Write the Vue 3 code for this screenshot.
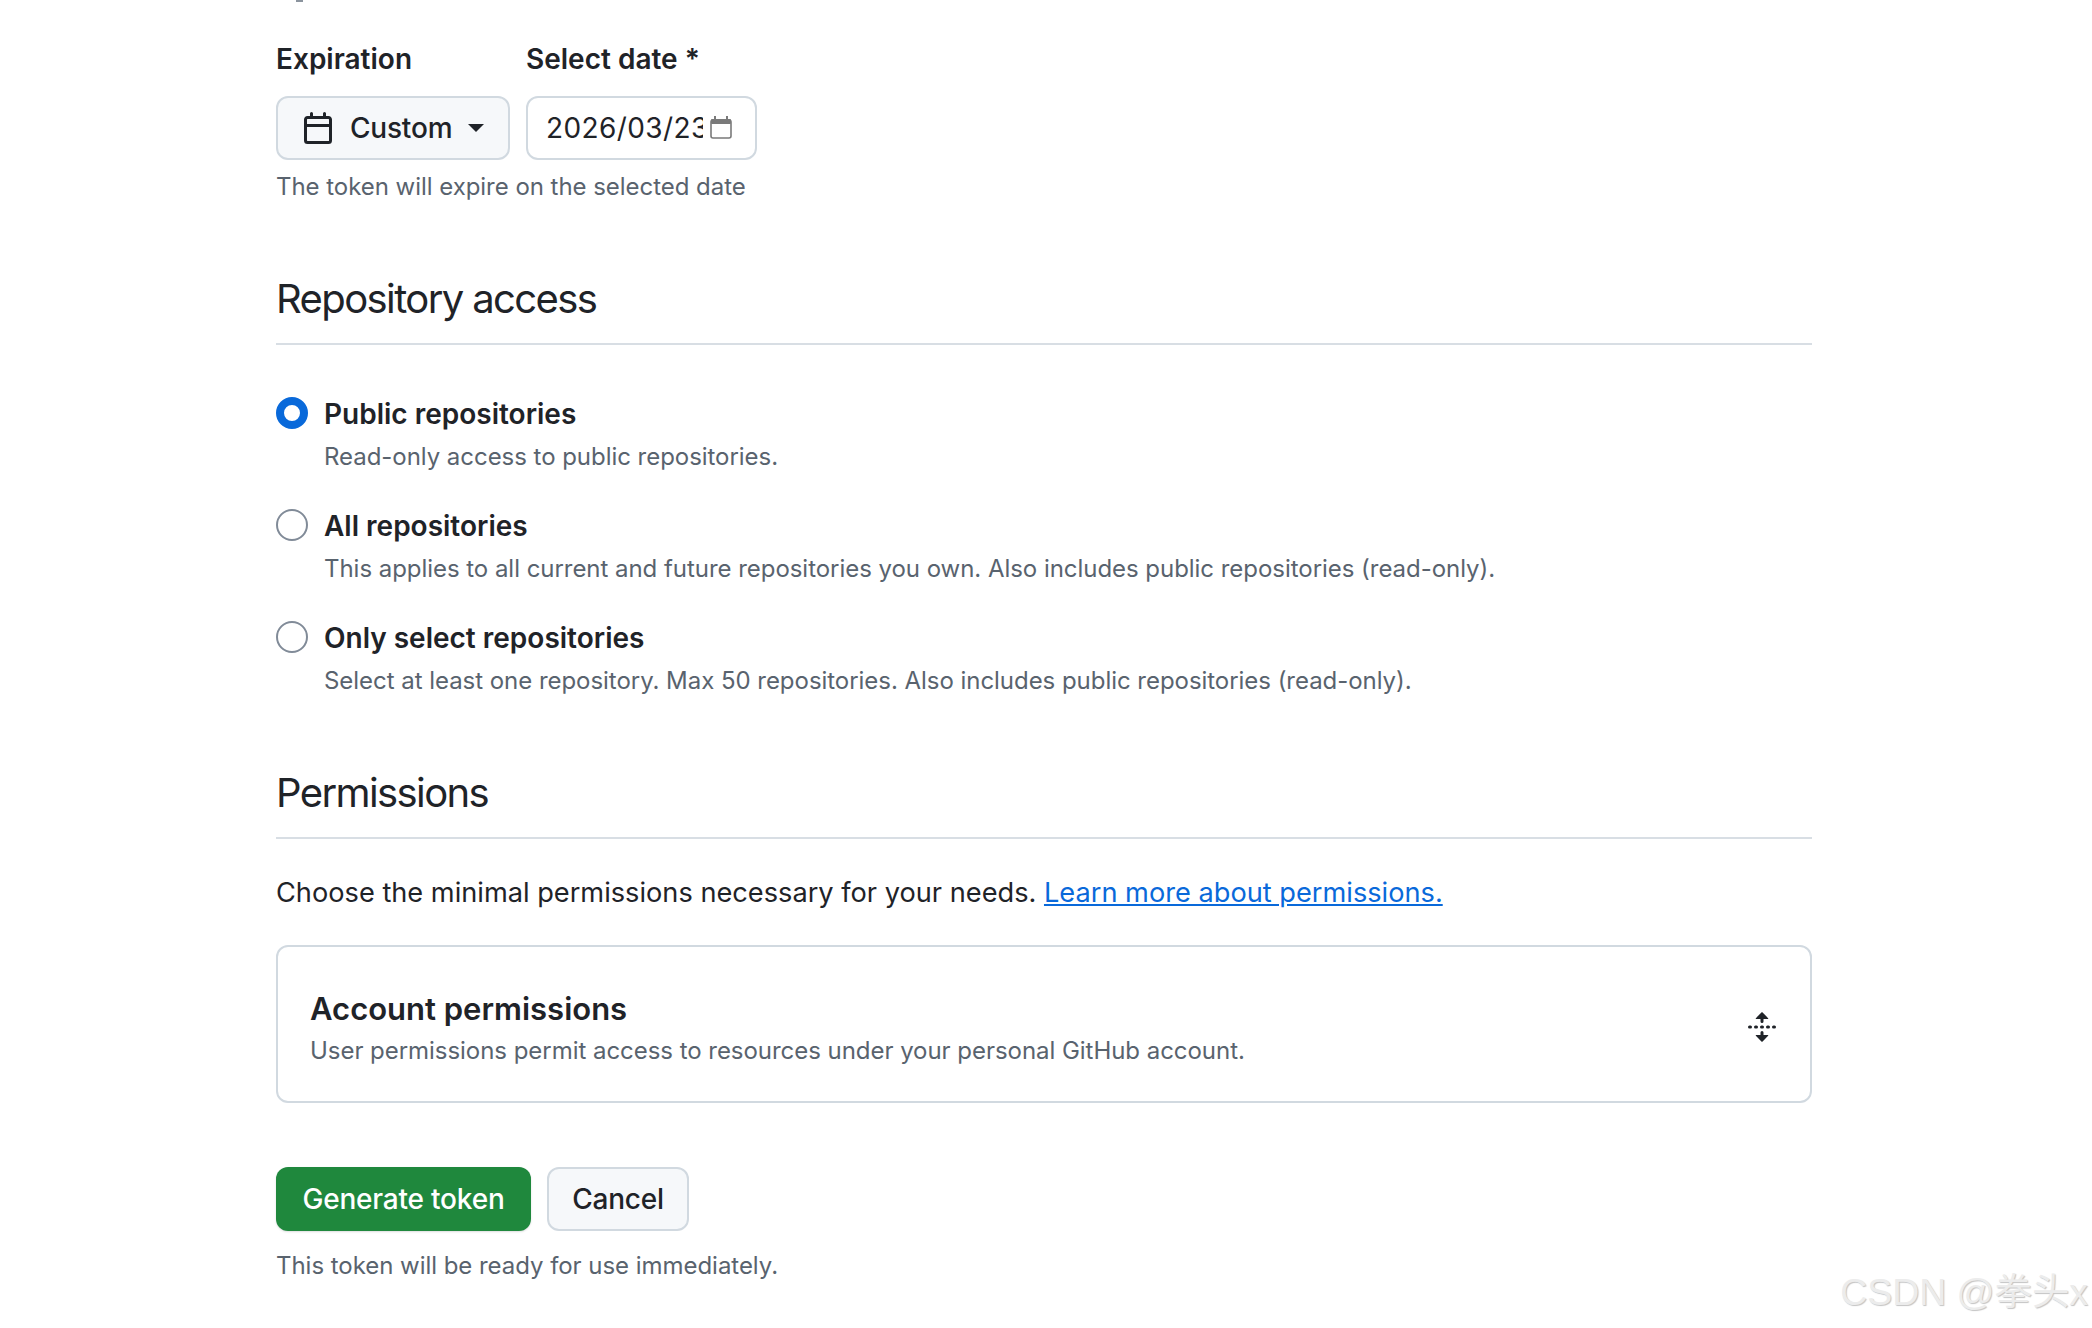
<template>
  <main class="page">
    <div class="sliver"></div>
    <section class="expiry">
      <div class="field">
        <div class="label">Expiration</div>
        <div class="btn select">
          <svg class="cal" viewBox="0 0 16 16" width="32" height="32"><path fill="currentColor" d="M4.75 0a.75.75 0 0 1 .75.75V2h5V.75a.75.75 0 0 1 1.5 0V2h1.25c.966 0 1.75.784 1.75 1.75v10.5A1.75 1.75 0 0 1 13.25 16H2.75A1.75 1.75 0 0 1 1 14.25V3.75C1 2.784 1.784 2 2.75 2H4V.75A.75.75 0 0 1 4.75 0ZM2.5 7.5v6.75c0 .138.112.25.25.25h10.5a.25.25 0 0 0 .25-.25V7.5Zm10.75-4H2.75a.25.25 0 0 0-.25.25V6h11V3.75a.25.25 0 0 0-.25-.25Z"/></svg>
          <span>Custom</span>
          <i class="caret"></i>
        </div>
      </div>
      <div class="field">
        <div class="label">Select date *</div>
        <div class="date">
          <span class="date-text">2026/03/23</span>
          <svg class="date-icon" viewBox="0 0 22 23" width="22" height="23"><rect x="1" y="4" width="20" height="18" rx="2" fill="#fff" stroke="#7a7a7a" stroke-width="1.6"/><rect x="1" y="3" width="20" height="5" rx="1" fill="#7a7a7a"/><rect x="4" y="0" width="2" height="4" fill="#7a7a7a"/><rect x="16" y="0" width="2" height="4" fill="#7a7a7a"/></svg>
        </div>
      </div>
    </section>
    <p class="note">The token will expire on the selected date</p>

    <h2 class="heading repo">Repository access</h2>
    <div class="radios">
      <div v-for="r in repos" :key="r.title" class="radio-row">
        <span class="radio" :class="{ on: r.on }"></span>
        <div>
          <div class="label">{{ r.title }}</div>
          <p class="note">{{ r.desc }}</p>
        </div>
      </div>
    </div>

    <h2 class="heading perm">Permissions</h2>
    <p class="choose">Choose the minimal permissions necessary for your needs. <a href="#">Learn more about permissions.</a></p>

    <div class="card">
      <div>
        <h3>Account permissions</h3>
        <p class="note">User permissions permit access to resources under your personal GitHub account.</p>
      </div>
      <svg class="fold" viewBox="0 0 16 16" width="32" height="32"><path fill="currentColor" d="M8.177.677l2.896 2.896a.25.25 0 0 1-.177.427H8.75v1.25a.75.75 0 0 1-1.5 0V4H5.104a.25.25 0 0 1-.177-.427L7.823.677a.25.25 0 0 1 .354 0ZM7.25 10.75a.75.75 0 0 1 1.5 0V12h2.146a.25.25 0 0 1 .177.427l-2.896 2.896a.25.25 0 0 1-.354 0l-2.896-2.896A.25.25 0 0 1 5.104 12H7.25v-1.25Zm-5-2a.75.75 0 0 0 0-1.5h-.5a.75.75 0 0 0 0 1.5h.5ZM6 8a.75.75 0 0 1-.75.75h-.5a.75.75 0 0 1 0-1.5h.5A.75.75 0 0 1 6 8Zm2.25.75a.75.75 0 0 0 0-1.5h-.5a.75.75 0 0 0 0 1.5h.5ZM12 8a.75.75 0 0 1-.75.75h-.5a.75.75 0 0 1 0-1.5h.5A.75.75 0 0 1 12 8Zm2.25.75a.75.75 0 0 0 0-1.5h-.5a.75.75 0 0 0 0 1.5h.5Z"/></svg>
    </div>

    <div class="actions">
      <div class="btn primary">Generate token</div>
      <div class="btn">Cancel</div>
    </div>
    <p class="note ready">This token will be ready for use immediately.</p>

    <div class="watermark">CSDN @拳头x</div>
  </main>
</template>

<script setup>
const repos = [
  { title: 'Public repositories', desc: 'Read-only access to public repositories.', on: true },
  { title: 'All repositories', desc: 'This applies to all current and future repositories you own. Also includes public repositories (read-only).' },
  { title: 'Only select repositories', desc: 'Select at least one repository. Max 50 repositories. Also includes public repositories (read-only).' },
]
</script>

<style>
html, body { margin: 0; background: #fff; }
</style>

<style scoped>
.page {
  position: relative;
  box-sizing: border-box;
  width: 2092px;
  height: 1328px;
  overflow: hidden;
  padding: 0 280px 0 276px;
  font-family: Inter, "Noto Sans", sans-serif;
  color: #1f2328;
  background: #fff;
}
.sliver { width: 7px; height: 2px; margin-left: 20px; background: #8b949e; }
.expiry { display: flex; gap: 16px; margin-top: 42px; }
.label { font-size: 28px; font-weight: 600; line-height: 30px; }
.field .label { margin-bottom: 22px; }
.btn {
  display: inline-flex; align-items: center; justify-content: center; box-sizing: border-box;
  height: 64px; padding: 0 24px; border: 2px solid #d1d9e0; border-radius: 12px;
  background: #f6f8fa; font-size: 28px; font-weight: 500; line-height: 1; letter-spacing: -.2px;
}
.select { width: 234px; justify-content: flex-start; padding: 0 20px 0 24px; }
.cal { margin-right: 16px; flex: none; }
.caret { margin-left: 16px; border: 8px solid transparent; border-top: 8px solid #1f2328; border-bottom: 0; }
.date {
  display: flex; align-items: center; box-sizing: border-box; width: 231px; height: 64px;
  padding: 0 22px 0 18px; border: 2px solid #d1d9e0; border-radius: 12px; font-size: 28px;
}
.date-text { width: 157px; overflow: hidden; white-space: nowrap; flex: none; letter-spacing: .4px; }
.date-icon { margin-left: 7px; margin-top: -2px; flex: none; }
.note { margin: 0; font-size: 24px; line-height: 36px; color: #59636e; letter-spacing: -.04px; }
.expiry + .note { margin-top: 9px; }
.heading { margin: 0; font-size: 40px; font-weight: 400; line-height: 60px; letter-spacing: -1.6px; padding-bottom: 14px; border-bottom: 2px solid #d8dee4; }
.repo { margin-top: 64px; }
.radios { display: flex; flex-direction: column; gap: 33px; margin-top: 51px; }
.radio-row { display: flex; gap: 16px; }
.radio-row .label { line-height: 36px; margin-bottom: 7px; }
.radio { box-sizing: border-box; width: 32px; height: 32px; margin-top: 1px; border: 2px solid #818b98; border-radius: 50%; background: #fff; flex: none; }
.radio.on { border: 8px solid #0969da; }
.perm { margin-top: 64px; }
.choose { margin: 36px 0 0; font-size: 27.2px; line-height: 36px; }
.choose a { color: #0969da; text-decoration: underline; }
.card {
  display: flex; align-items: center; justify-content: space-between; box-sizing: border-box;
  height: 158px; margin-top: 34px; padding: 0 32px; border: 2px solid #d1d9e0; border-radius: 12px;
}
.card h3 { margin: 0 0 4px; font-size: 31px; font-weight: 600; line-height: 40px; padding-top: 10px; }
.fold { flex: none; margin-top: 6px; }
.actions { display: flex; gap: 16px; margin-top: 64px; }
.primary { background: #1f883d; border: 0; color: #fff; box-shadow: 0 1px 2px rgba(31,35,40,.15); width: 255px; padding: 0; }
.actions .btn:last-child { width: 142px; padding: 0; }
.ready { margin-top: 17px; }
.watermark {
  position: absolute; right: 4px; bottom: 10px; font-family: "Liberation Sans", "Noto Sans CJK SC", sans-serif;
  font-size: 37.4px; line-height: 52px; color: #ececec; text-shadow: 1px 1px 1px #c4c4c4; white-space: nowrap;
}
</style>
